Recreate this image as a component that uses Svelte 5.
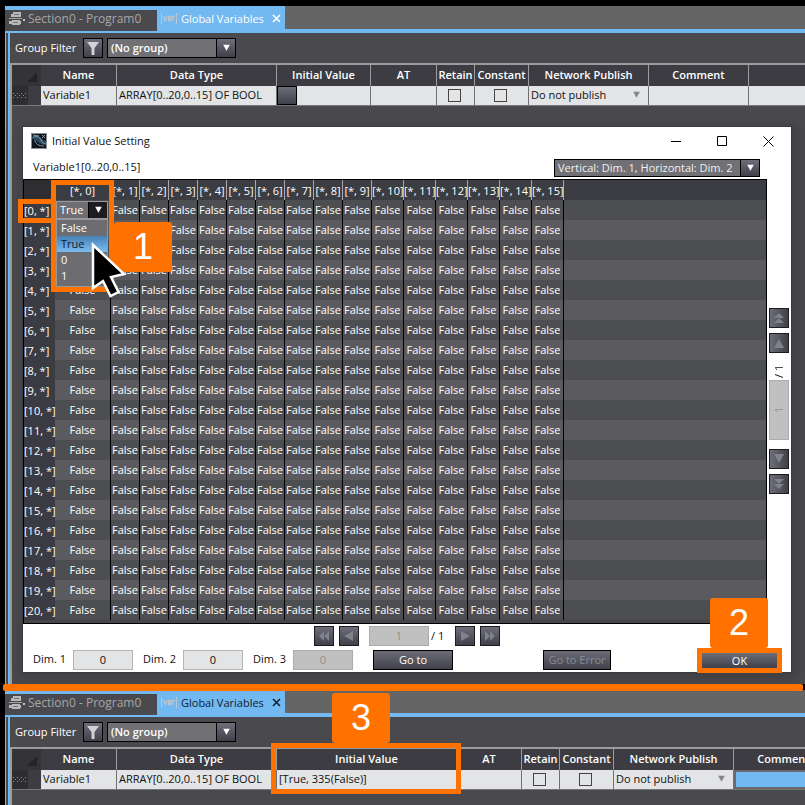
<script>
  const dims = { rows: 21, cols: 16 };
  const rows = Array.from({ length: dims.rows }, (_, i) => i);
  const cols = Array.from({ length: dims.cols }, (_, i) => i);
  const options = ['False', 'True', '0', '1'];

  const panels = {
    before: { id: 'before', widths: [16, 13, 76, 160, 94, 66, 38, 54, 120, 100], value: '' },
    after: { id: 'after', widths: [16, 13, 76, 160, 180, 65, 38, 54, 120, 100], value: '[True, 335(False)]' }
  };

  let cell = $state('True');
</script>

{#snippet arrow(kind)}
  <svg class="glyph" viewBox="0 0 12 12" aria-hidden="true">
    {#if kind === 'up'}<path d="M6 2 11 11H1z" />
    {:else if kind === 'down'}<path d="M6 10 1 1h10z" />
    {:else if kind === 'left'}<path d="M1 6 10 1v10z" />
    {:else if kind === 'right'}<path d="M11 6 2 1v10z" />
    {:else if kind === 'first-up'}<path d="M6 1 11 6H1zM6 6l5 5H1z" />
    {:else if kind === 'last-down'}<path d="M6 6 1 1h10zM6 11 1 6h10z" />
    {:else if kind === 'first'}<path d="M1 6 6 1v10zM6 6l5-5v10z" />
    {:else if kind === 'last'}<path d="M6 6 1 1v10zM11 6 6 1v10z" />
    {/if}
  </svg>
{/snippet}

{#snippet tabs(active)}
  <nav class="tabs">
    <div class="tab-group">
      <button class="tab">
        <svg width="17" height="14" viewBox="0 0 17 14" aria-hidden="true">
          <path d="M4 0h8v5H4zM2 2h2v3H2z" fill="#b9b9b9" />
          <path d="M0 6h13v1H0z" fill="#a3a3a3" />
          <path d="M3 8h8v5H3zM0 9h3v3H0zM11 9h1v3h-1z" fill="#b9b9b9" />
          <path d="M5 2h5v1H5zM4 10h5v1H4z" fill="#727276" />
          <path d="M14 7h2v2h-2z" fill="#c4c4c4" />
        </svg>
        <span>Section0 - Program0</span>
      </button>
      <button class="tab current" class:dark={active === 'after'}>
        <svg width="16" height="11" viewBox="0 0 16 11" aria-hidden="true">
          <path d="M.5 0v11M15.500 0v11" stroke="#b4c8d8" />
          <path
            d="M2.500 3 4.200 7.500 6 3M7 3.500h2.500v4H7.500v-2h2M11.500 8V3.500H14"
            fill="none"
            stroke="#b9c6d1"
            stroke-width="1.300"
          />
        </svg>
        <span>Global Variables</span>
        <svg class="close" width="9" height="9" viewBox="0 0 9 9" aria-label="Close">
          <path d="M1 1l7 7M8 1 1 8" stroke="currentColor" stroke-width="1.600" />
        </svg>
      </button>
    </div>
    <div class="tab-rest"></div>
  </nav>
{/snippet}

{#snippet toolbar(id)}
  <div class="toolbar">
    <label for="group-{id}">Group Filter</label>
    <button class="filter" aria-label="Filter">
      <svg width="12" height="13" viewBox="0 0 12 13" aria-hidden="true">
        <path d="M0 0h12L7.500 6v7h-3V6z" fill="#d2d2d6" />
      </svg>
    </button>
    <div class="combo group">
      <select id="group-{id}"><option>(No group)</option></select>
      <span class="drop">{@render arrow('down')}</span>
    </div>
  </div>
{/snippet}

{#snippet variables(p)}
  <table class="vars">
    <colgroup>
      {#each p.widths as w}<col style="width: {w}px" />{/each}
      <col />
    </colgroup>
    <thead>
      <tr>
        <th class="corner" colspan="2">
          <svg width="10" height="10" viewBox="0 0 10 10" aria-hidden="true">
            <path d="M10 0v10H0z" fill="#242426" />
          </svg>
        </th>
        <th>Name</th><th>Data Type</th><th>Initial Value</th><th>AT</th><th>Retain</th>
        <th>Constant</th><th>Network Publish</th><th>Comment</th><th></th>
      </tr>
    </thead>
    <tbody>
      <tr>
        <td class="grip">
          <svg width="14" height="5" viewBox="0 0 14 5" aria-hidden="true">
            <path
              d="M0 .5h14M2 2.500h12M0 4.500h14"
              stroke="#909094"
              stroke-dasharray="1 3"
            />
          </svg>
        </td>
        <td class="mark"></td>
        <td>Variable1</td>
        <td>ARRAY[0..20,0..15] OF BOOL</td>
        <td class="init">
          {#if p.value}{p.value}{:else}<button class="open" aria-label="Edit initial value"></button>{/if}
        </td>
        <td></td>
        <td class="tick"><input type="checkbox" aria-label="Retain" /></td>
        <td class="tick"><input type="checkbox" aria-label="Constant" /></td>
        <td>
          <div class="publish">
            <select aria-label="Network Publish"><option>Do not publish</option></select>
            {@render arrow('down')}
          </div>
        </td>
        <td class:selected={p.id === 'after'}></td>
        <td class:selected={p.id === 'after'}></td>
      </tr>
    </tbody>
  </table>
{/snippet}

<main>
  <section class="panel">
    {@render tabs('before')}
    <div class="frame">
      <div class="inner">
        {@render toolbar('before')}
        <div class="grid-area">
          {@render variables(panels.before)}

          <div class="dialog" role="dialog" aria-labelledby="dialog-title">
            <header>
              <svg width="16" height="16" viewBox="0 0 16 16" aria-hidden="true">
                <path d="M0 0h16v16H0z" fill="#8b8d90" />
                <path d="M1 1h14v14H1z" fill="#10151d" />
                <path d="M1 4c4-2 7-1 9 1s3 3 5 3v3c-3 1-6 0-8-2S3 6 1 6z" fill="#2c4a62" />
                <path d="M2 4c4-1 7 0 8 3s3 4 5 4M4 7c0 4 4 6 9 6" fill="none" stroke="#7f9db2" />
                <path d="m11 2 3 3M14 2l-3 3M2 2l6 1" stroke="#8d9ba6" />
              </svg>
              <h1 id="dialog-title">Initial Value Setting</h1>
              <div class="window-buttons">
                <button aria-label="Minimize">
                  <svg width="10" height="11" viewBox="0 0 10 11"><path d="M0 5.500h10" /></svg>
                </button>
                <button aria-label="Maximize">
                  <svg width="10" height="10" viewBox="0 0 10 10"><path d="M.5.5h9v9h-9z" /></svg>
                </button>
                <button aria-label="Close">
                  <svg width="11" height="11" viewBox="0 0 11 11"><path d="m.5.5 10 10M10.500.5l-10 10" /></svg>
                </button>
              </div>
            </header>

            <div class="subhead">
              <label for="axes">Variable1[0..20,0..15]</label>
              <div class="combo axes">
                <select id="axes"><option>Vertical: Dim. 1, Horizontal: Dim. 2</option></select>
                <span class="drop">{@render arrow('down')}</span>
              </div>
            </div>

            <div class="body">
              <div class="sheet">
                <table class="values">
                  <colgroup>
                    <col class="head-col" /><col class="first-col" />
                    {#each cols.slice(1) as c}<col class={c < 10 ? 'narrow' : 'wide'} />{/each}
                    <col />
                  </colgroup>
                  <thead>
                    <tr>
                      <th class="blank"></th>
                      {#each cols as c}<th>[*, {c}]</th>{/each}
                      <th class="rest"></th>
                    </tr>
                  </thead>
                  <tbody>
                    {#each rows as r}
                      <tr>
                        <th scope="row">[{r}, *]</th>
                        {#each cols as c}
                          <td>
                            {#if r === 0 && c === 0}
                              <div class="cell-combo">
                                <select aria-label="Value of [0, 0]" bind:value={cell}>
                                  {#each options as o}<option>{o}</option>{/each}
                                </select>
                                <span class="drop">{@render arrow('down')}</span>
                              </div>
                            {:else}False{/if}
                          </td>
                        {/each}
                        <td class="rest"></td>
                      </tr>
                    {/each}
                  </tbody>
                </table>

                <div class="options" role="listbox" aria-label="Value">
                  {#each options as o}
                    <button
                      role="option"
                      aria-selected={o === cell}
                      class:active={o === cell}
                      onclick={() => (cell = o)}>{o}</button>
                  {/each}
                </div>
                <div class="outline column"></div>
                <div class="outline row"></div>
                <div class="callout one">1</div>
                <svg class="pointer" width="38" height="58" viewBox="0 0 38 58" aria-hidden="true">
                  <path
                    d="M2 4v43l10-7 7.500 15 8-4-7.500-15 13-3z"
                    fill="#000"
                    stroke="#fff"
                    stroke-width="2.500"
                  />
                </svg>
              </div>

              <div class="side-pager">
                <button class="step" disabled aria-label="First page">{@render arrow('first-up')}</button>
                <button class="step" disabled aria-label="Previous page">{@render arrow('up')}</button>
                <div class="turned">
                  <input class="field off" value="1" disabled aria-label="Vertical page" />
                  <span>/ 1</span>
                </div>
                <button class="step" disabled aria-label="Next page">{@render arrow('down')}</button>
                <button class="step" disabled aria-label="Last page">{@render arrow('last-down')}</button>
              </div>
            </div>

            <div class="pager">
              <button class="step" disabled aria-label="First page">{@render arrow('first')}</button>
              <button class="step" disabled aria-label="Previous page">{@render arrow('left')}</button>
              <input class="field off" value="1" disabled aria-label="Horizontal page" />
              <span>/ 1</span>
              <button class="step" disabled aria-label="Next page">{@render arrow('right')}</button>
              <button class="step" disabled aria-label="Last page">{@render arrow('last')}</button>
            </div>

            <footer>
              <label for="dim1">Dim. 1</label><input id="dim1" class="field" value="0" />
              <label for="dim2">Dim. 2</label><input id="dim2" class="field" value="0" />
              <label for="dim3">Dim. 3</label><input id="dim3" class="field off" value="0" disabled />
              <button class="action goto">Go to</button>
              <button class="action error" disabled>Go to Error</button>
              <div class="ok-wrap">
                <button class="ok">OK</button>
                <div class="callout two">2</div>
              </div>
            </footer>
          </div>
        </div>
      </div>
    </div>
  </section>

  <div class="divider"></div>

  <section class="panel last">
    {@render tabs('after')}
    <div class="frame">
      <div class="inner">
        {@render toolbar('after')}
        <div class="grid-area">
          {@render variables(panels.after)}
          <div class="outline result"></div>
          <div class="callout three">3</div>
        </div>
      </div>
    </div>
  </section>
</main>

<style>
  :global(body) {
    background: #000;
  }
  main {
    --blue: #72b8f1;
    --orange: #ff7200;
    --panel: #4a494e;
    --line: #9c9c9c;
    --steel: linear-gradient(#6c6d79, #3f4049);
    box-sizing: border-box;
    min-height: 100vh;
    padding: 6px 0 0 5px;
    display: flex;
    flex-direction: column;
    overflow: hidden;
    background: #000;
    color: #fff;
    font: 11px/16px 'Open Sans', 'Noto Sans', sans-serif;
  }
  main :global(*) {
    box-sizing: border-box;
  }
  button,
  input,
  select {
    font: inherit;
    color: inherit;
    margin: 0;
    padding: 0;
    border: 0;
    border-radius: 0;
    background: none;
    appearance: none;
    outline: 0;
  }
  svg {
    display: block;
    flex: none;
  }
  .panel {
    display: flex;
    flex-direction: column;
    background: var(--panel);
  }
  .last {
    flex: 1;
  }
  .divider {
    height: 6px;
    margin: 0 2px 0 -2px;
    background: var(--orange);
    box-shadow: 0 1px var(--orange);
    border-radius: 2px;
    position: relative;
    z-index: 1;
  }

  .tabs {
    display: flex;
    height: 27px;
  }
  .tab-group {
    display: flex;
    width: 280px;
    background: var(--blue);
  }
  .tab-rest {
    flex: 1;
    background: #656565;
    border-bottom: 4px solid var(--blue);
  }
  .tab {
    display: flex;
    align-items: center;
    width: 152px;
    height: 21px;
    margin-top: 4px;
    padding: 0 0 4px 4px;
    gap: 2px;
    background: var(--panel);
    color: #a6a6a8;
    font-size: 12px;
    white-space: nowrap;
  }
  .tab.current {
    width: 128px;
    background: none;
    color: #fff;
    gap: 4px;
    font-size: 11px;
    font-weight: 500;
  }
  .tab.current.dark {
    color: #14222e;
  }
  .close {
    margin-left: auto;
    margin-right: 4px;
  }

  .frame {
    flex: 1;
    display: flex;
    border-left: 1px solid var(--blue);
    padding-left: 2px;
  }
  .inner {
    flex: 1;
    min-width: 0;
    display: flex;
    flex-direction: column;
    border-left: 2px solid var(--blue);
  }
  .toolbar {
    display: flex;
    align-items: center;
    height: 30px;
    padding-left: 5px;
    gap: 4px;
  }
  .toolbar label {
    width: 64px;
    white-space: nowrap;
    font-weight: 500;
  }
  .filter {
    width: 20px;
    height: 20px;
    border: 1px solid #000;
    background: var(--steel);
    display: grid;
    place-items: center;
  }
  .combo {
    display: flex;
    border: 1px solid #000;
    background: #707075;
  }
  .combo select {
    flex: 1;
    min-width: 0;
  }
  .drop {
    width: 19px;
    display: grid;
    place-items: center;
    border-left: 1px solid #000;
    background: var(--steel);
    color: #fff;
  }
  .glyph {
    width: 12px;
    height: 12px;
    fill: currentColor;
  }
  .drop .glyph {
    width: 9px;
    height: 8px;
  }
  .group {
    width: 129px;
    height: 20px;
    font-weight: 600;
  }
  .group select {
    padding-left: 3px;
  }

  .grid-area {
    position: relative;
    flex: 1;
    border-left: 2px solid var(--line);
  }
  .vars {
    width: 100%;
    table-layout: fixed;
    border-collapse: separate;
    border-spacing: 0;
    border-top: 2px solid var(--line);
    border-bottom: 1px solid #77777a;
    white-space: nowrap;
  }
  .vars th {
    height: 21px;
    padding: 0 0 2px;
    background: #3c3c42;
    border-right: 1px solid var(--line);
    font-weight: 600;
    line-height: 18px;
  }
  .vars th.corner {
    border: 0;
    background: #343436;
  }
  .corner svg {
    margin: 5px 0 0 15px;
  }
  .vars th:last-child,
  .vars td:last-child {
    border-right: 0;
  }
  .vars td {
    height: 19px;
    padding: 0 0 2px 2px;
    background: #e2e4e6;
    border-right: 1px solid #707073;
    color: #111;
  }
  .vars td.grip {
    background: #2e2e30;
    border: 0;
    padding: 0 1px;
  }
  .vars td.mark {
    background: #3c3c42;
    border: 0;
  }
  .vars td.init:has(button) {
    padding: 0;
  }
  .open {
    display: block;
    width: 20px;
    height: 19px;
    border: 1px solid #000;
    background: var(--steel);
  }
  .vars td.tick {
    padding: 0 3px 0 0;
  }
  .tick input {
    display: block;
    width: 13px;
    height: 13px;
    margin: 0 auto;
    border: 1px solid #444;
  }
  .publish {
    display: flex;
    align-items: center;
    color: #111;
  }
  .publish select {
    flex: 1;
    min-width: 0;
    height: 16px;
  }
  .publish .glyph {
    width: 9px;
    height: 8px;
    margin-right: 7px;
    color: #858585;
  }
  .vars td.selected {
    background: var(--blue);
    border: 2px solid #6a6a6d;
    border-right: 0;
  }
  .vars td.selected + td.selected {
    border-left: 0;
  }

  .dialog {
    margin: 21px 14px 12px 11px;
    background: #fff;
    color: #111;
    box-shadow: 0 0 0 1px #3a3a3c, 2px 3px 12px 4px #3a3a3ca0;
  }
  header {
    display: flex;
    align-items: center;
    height: 28px;
    padding-left: 8px;
    gap: 5px;
  }
  h1 {
    flex: 1;
    margin: 0;
    font: inherit;
  }
  .window-buttons {
    display: flex;
  }
  .window-buttons button {
    width: 46px;
    height: 28px;
    display: grid;
    place-items: center;
  }
  .window-buttons path {
    fill: none;
    stroke: #000;
  }
  .subhead {
    display: flex;
    justify-content: space-between;
    align-items: center;
    height: 24px;
    padding: 0 31px 0 10px;
  }
  .axes {
    width: 206px;
    height: 18px;
    margin-top: 2px;
    color: #f0f0f0;
    font-weight: 500;
  }
  .axes select {
    padding-left: 3px;
  }
  .body {
    display: flex;
    gap: 2px;
    padding-right: 2px;
  }
  .sheet {
    position: relative;
    flex: 1;
    min-width: 0;
    border: 1px solid #000;
    background: #464549;
    padding-bottom: 3px;
    color: #fff;
  }
  .values {
    width: 100%;
    table-layout: fixed;
    border-spacing: 0;
    white-space: nowrap;
    text-align: center;
  }
  .head-col {
    width: 31px;
  }
  .first-col {
    width: 56px;
  }
  .narrow {
    width: 29px;
  }
  .wide {
    width: 32px;
  }
  .values th,
  .values td {
    height: 20px;
    padding: 0;
    font-weight: 500;
  }
  .values thead th {
    background: #3c3c43;
    border-right: 1px solid #a8a8aa;
    padding-top: 2px;
  }
  .values thead th.blank {
    background: #2e2e30;
    border: 0;
  }
  .values tbody th {
    background: #3b3b44;
    text-align: left;
    padding-top: 2px;
  }
  .values td {
    background: #4d4e52;
    border-right: 1px solid #000;
  }
  .values tr:nth-child(even) td {
    background: #5b5a5f;
  }
  .values .rest {
    border-right: 0 !important;
  }
  .cell-combo {
    display: flex;
    height: 18px;
    margin: 0 2px 0 1px;
    border: 1px solid #9a9a9d;
    background: #6e6e73;
  }
  .cell-combo select {
    flex: 1;
    min-width: 0;
    padding-left: 3px;
  }
  .cell-combo .drop {
    background: #1d1d20;
  }
  .options {
    position: absolute;
    left: 32px;
    top: 39px;
    width: 52px;
    padding: 0 0 2px;
    display: flex;
    flex-direction: column;
    border: 1px solid #97979a;
    background: #6c6c71;
    font-weight: 500;
  }
  .options button {
    height: 16px;
    padding-left: 4px;
    text-align: left;
  }
  .options .active {
    background: linear-gradient(#4680b4, #7dbcf2);
    color: #0b1c2d;
  }
  .outline {
    position: absolute;
    border: 5px solid var(--orange);
  }
  .outline.column {
    left: 27px;
    top: 0;
    width: 63px;
    height: 112px;
  }
  .outline.row {
    left: -6px;
    top: 19px;
    width: 38px;
    height: 24px;
  }
  .outline.result {
    left: 259px;
    top: -4px;
    width: 190px;
    height: 51px;
  }
  .callout {
    position: absolute;
    width: 58px;
    height: 50px;
    border-radius: 3px;
    background: var(--orange);
    color: #fff;
    font: 36px/50px 'Liberation Sans', Arial, sans-serif;
    text-align: center;
  }
  .callout.one {
    left: 90px;
    top: 42px;
  }
  .callout.two {
    right: 14px;
    bottom: 25px;
  }
  .callout.three {
    left: 320px;
    top: -54px;
  }
  .pointer {
    position: absolute;
    left: 67px;
    top: 61px;
  }

  .step {
    width: 20px;
    height: 20px;
    border: 1px solid #1c1c1e;
    background: var(--steel);
    color: #7f818b;
    display: grid;
    place-items: center;
  }
  .field {
    width: 60px;
    height: 20px;
    padding-bottom: 1px;
    border: 1px solid #b5b5b5;
    background: #e2e4e6;
    text-align: center;
  }
  .field.off {
    background: #c0c0c0;
    border-color: #acacac;
    color: #8c8c8c;
  }
  .side-pager {
    width: 20px;
    display: flex;
    flex-direction: column;
    justify-content: center;
    gap: 5px;
    padding-bottom: 1px;
  }
  .side-pager .step {
    background: linear-gradient(90deg, #6c6d79, #3f4049);
  }
  .turned {
    writing-mode: vertical-rl;
    transform: rotate(180deg);
    display: flex;
    align-items: center;
    gap: 2px;
    height: 82px;
    margin-bottom: 4px;
  }
  .turned .field {
    width: 20px;
    height: 60px;
    padding: 0;
  }
  .pager {
    display: flex;
    align-items: center;
    justify-content: center;
    gap: 5px;
    height: 24px;
  }
  .pager .field {
    margin-left: 5px;
  }
  .pager span {
    width: 16px;
    margin: 0 3px 0 -3px;
  }
  footer {
    display: flex;
    align-items: center;
    height: 24px;
    padding: 0 9px 0 10px;
  }
  footer label {
    width: 40px;
    padding-bottom: 2px;
  }
  footer .field {
    margin-right: 10px;
  }
  .action {
    height: 20px;
    padding-bottom: 1px;
    border: 1px solid #000;
    background: var(--steel);
    color: #fff;
    font-weight: 500;
  }
  .goto {
    width: 80px;
    margin-left: 10px;
  }
  .error {
    width: 68px;
    margin-left: 90px;
    color: #8a8b92;
  }
  .ok-wrap {
    position: relative;
    margin-left: auto;
    padding: 5px;
    background: var(--orange);
  }
  .ok {
    display: block;
    width: 75px;
    height: 15px;
    line-height: 15px;
    background: var(--steel);
    color: #fff;
    font-weight: 500;
  }
</style>
